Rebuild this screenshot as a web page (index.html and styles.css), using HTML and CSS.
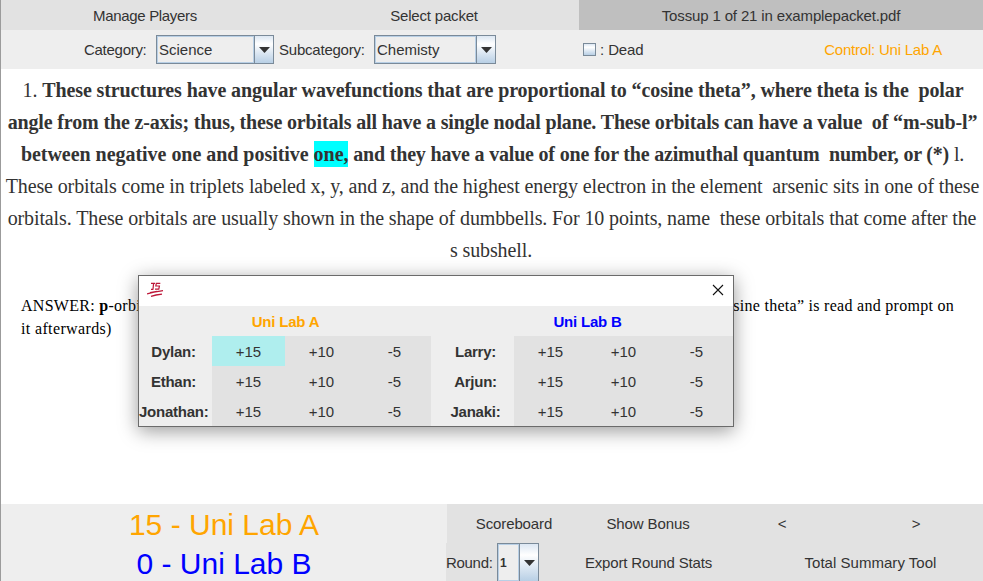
FILE: index.html
```html
<!DOCTYPE html>
<html lang="en">
<head>
<meta charset="utf-8">
<title>Tossup reader</title>
<link rel="stylesheet" href="styles.css">
</head>
<body>
<div class="app">
  <nav class="menu">
    <div class="menu-item manage"><span>Manage Players</span></div>
    <div class="menu-item select"><span>Select packet</span></div>
    <div class="menu-item current"><span>Tossup 1 of 21 in examplepacket.pdf</span></div>
  </nav>
  <div class="filters">
    <span class="label category">Category:</span>
    <div class="combo combo-category"><span class="value">Science</span><span class="arrow"><svg width="11" height="6" viewBox="0 0 11 6"><path d="M0 0h11L5.5 6z" fill="#333"/></svg></span></div>
    <span class="label subcategory">Subcategory:</span>
    <div class="combo combo-sub"><span class="value">Chemisty</span><span class="arrow"><svg width="11" height="6" viewBox="0 0 11 6"><path d="M0 0h11L5.5 6z" fill="#333"/></svg></span></div>
    <span class="check"></span>
    <span class="label dead">: Dead</span>
    <span class="control">Control: Uni Lab A</span>
  </div>
  <main class="content">
    <div class="question">
      <div class="line l1">1. <b>These structures have angular wavefunctions that are proportional to “cosine theta”, where theta is the&nbsp; polar</b></div>
      <div class="line l2"><b>angle from the z-axis; thus, these orbitals all have a single nodal plane. These orbitals can have a value&nbsp; of “m-sub-l”</b></div>
      <div class="line l3"><b><span class="lead">between negative one and positive <mark>one,</mark></span> and they have a value of one for the azimuthal quantum&nbsp; number, or (*)</b> l.</div>
      <div class="line l4">These orbitals come in triplets labeled x, y, and z, and the highest energy electron in the element&nbsp; arsenic sits in one of these</div>
      <div class="line l5">orbitals. These orbitals are usually shown in the shape of dumbbells. For 10 points, name&nbsp; these orbitals that come after the</div>
      <div class="line l6">s subshell.</div>
    </div>
    <div class="answer">
      <div class="answer-row"><span>ANSWER: <b>p</b>-orbitals</span><span>“cosine theta” is read and prompt on</span></div>
      <div class="answer-end">it afterwards)</div>
    </div>
  </main>
  <footer class="footer">
    <div class="scores">
      <div class="score team-a">15 - Uni Lab A</div>
      <div class="score team-b">0 - Uni Lab B</div>
    </div>
    <div class="actions">
      <div class="action-row top"><span>Scoreboard</span><span>Show Bonus</span><span>&lt;</span><span>&gt;</span></div>
      <div class="action-row bottom">
        <div class="round"><span class="label">Round:</span><div class="combo combo-round"><span class="value">1</span><span class="arrow"><svg width="11" height="6" viewBox="0 0 11 6"><path d="M0 0h11L5.5 6z" fill="#333"/></svg></span></div></div>
        <span class="export">Export Round Stats</span><span class="total">Total Summary Tool</span>
      </div>
    </div>
  </footer>
</div>
<div class="dialog">
  <div class="titlebar">
    <svg class="logo" width="17" height="16" viewBox="0 0 17 16" fill="none" stroke="#bd1738"><path stroke-width="1.2" d="M4 1.4h4M6.6 1.4L6 7.3M4 7.4h2.4M13.3 1.4H9.3L8.8 4h3.6L11.8 7.2H8"/><path stroke-width="1.3" d="M0 11.8L7 10.2 16 8.7M3 10.6L10 9.4M4 14.4L9 13 15 12.2"/></svg>
    <svg class="close" width="12" height="12" viewBox="0 0 12 12"><path d="M1 1l10 10M11 1L1 11" stroke="#111" stroke-width="1.1"/></svg>
  </div>
  <div class="teams">
    <div class="team team-left">
      <div class="team-name team-a">Uni Lab A</div>
      <div class="player"><b>Dylan:</b><span class="picked">+15</span><span>+10</span><span>-5</span></div>
      <div class="player"><b>Ethan:</b><span>+15</span><span>+10</span><span>-5</span></div>
      <div class="player"><b>Jonathan:</b><span>+15</span><span>+10</span><span>-5</span></div>
    </div>
    <div class="team team-right">
      <div class="team-name team-b">Uni Lab B</div>
      <div class="player"><b>Larry:</b><span>+15</span><span>+10</span><span>-5</span></div>
      <div class="player"><b>Arjun:</b><span>+15</span><span>+10</span><span>-5</span></div>
      <div class="player"><b>Janaki:</b><span>+15</span><span>+10</span><span>-5</span></div>
    </div>
  </div>
</div>
</body>
</html>
```
FILE: styles.css
```css
* { box-sizing: border-box; }
body {
  margin: 0;
  width: 983px;
  height: 581px;
  overflow: hidden;
  background: #fff;
  color: #333;
  font: 15px/18px "Liberation Sans", Arial, sans-serif;
}
.app { display: flex; flex-direction: column; height: 581px; border-left: 1px solid #9b9b9b; }
.menu { display: flex; height: 30px; background: #e2e2e2; }
.menu-item { display: flex; align-items: center; justify-content: center; padding-top: 2px; white-space: nowrap; }
.manage { width: 288px; letter-spacing: -.33px; }
.select { width: 290px; letter-spacing: -.18px; }
.current { flex: 1; background: #bfbfbf; letter-spacing: -.14px; }
.filters { display: flex; align-items: center; height: 39px; background: #eee; white-space: nowrap; }
.category { width: 72px; margin-left: 83px; letter-spacing: -.28px; }
.subcategory { width: 95px; margin-left: 5px; letter-spacing: -.22px; }
.combo { display: flex; border: 1px solid #7a8a99; background: #eee; }
.combo .value { flex: 1; border: 1px solid #b8cfe5; display: flex; align-items: center; padding-left: 1px; }
.combo .arrow {
  width: 19px;
  border-left: 1px solid #7a8a99;
  display: flex;
  align-items: center;
  justify-content: center;
  background: linear-gradient(#dce7f3, #fff 30%, #e9f0f7 50%, #b8cfe5);
}
.combo-category { width: 118px; height: 29px; }
.combo-sub { width: 122px; height: 29px; }
.check { width: 13px; height: 13px; margin-left: 87px; border: 1px solid #7a8a99; background: linear-gradient(#dce7f3, #fff 30%, #b8cfe5); }
.dead { margin-left: 4px; letter-spacing: -.1px; }
.control { margin-left: auto; margin-right: 41px; color: #ffa500; letter-spacing: -.22px; }
.content { flex: 1; }
.question { padding-top: 5px; font: 20px/32px "Liberation Serif", "Times New Roman", serif; text-align: center; }
.line { display: flex; justify-content: center; white-space: pre; height: 32px; }
.l1 { letter-spacing: -.108px; padding-left: 2px; }
.l2 { letter-spacing: -.15px; padding-left: 1px; }
.l3 { letter-spacing: -.19px; padding-left: 1px; }
.lead { letter-spacing: -.035px; }
.l4 { letter-spacing: -.125px; padding-left: 1px; }
.l5 { letter-spacing: -.112px; }
.l6 { letter-spacing: -.1px; padding-right: 2px; }
mark { background: #0ff; color: inherit; padding: 2px 0; }
.answer { padding: 28px 29px 0 20px; font: 16px/23px "Liberation Serif", "Times New Roman", serif; letter-spacing: .28px; color: #000; }
.answer-row { display: flex; justify-content: space-between; }
.answer-end { letter-spacing: .36px; }
.footer { display: flex; height: 77px; background: #eee; }
.scores { width: 445px; padding-left: 1px; text-align: center; }
.score { height: 39px; line-height: 42px; font-size: 30px; }
.team-a { color: #ffa500; }
.team-b { color: #00f; }
.actions { flex: 1; background: #e2e2e2; }
.action-row { display: flex; height: 39px; align-items: center; text-align: center; white-space: nowrap; }
.top { border-left: 1px solid #eee; }
.top span { flex: 1; letter-spacing: -.12px; }
.round { display: flex; align-items: center; width: 93px; height: 39px; }
.round .label { width: 51px; text-align: left; letter-spacing: -.3px; }
.combo-round { width: 42px; height: 39px; }
.combo-round .value { font-size: 12px; font-weight: bold; }
.export { width: 219px; letter-spacing: -.16px; }
.total { width: 225px; letter-spacing: .03px; }
.dialog {
  position: absolute;
  left: 138px;
  top: 275px;
  width: 596px;
  height: 152px;
  border: 1px solid #6b6b6b;
  background: #eee;
  box-shadow: 0 4px 18px rgba(0, 0, 0, .4);
}
.titlebar { display: flex; justify-content: space-between; height: 30px; padding: 6px 9px 0 8px; background: #fff; }
.close { margin-top: 2px; }
.teams { display: flex; }
.team-left { width: 292px; }
.team-right { width: 302px; }
.team-name { height: 30px; line-height: 32px; text-align: center; font-weight: bold; letter-spacing: -.2px; }
.team-left .team-name { padding-left: 1px; }
.team-right .team-name { padding-left: 11px; }
.player { display: flex; height: 30px; line-height: 32px; text-align: center; white-space: nowrap; }
.player b { width: 73px; padding-right: 4px; letter-spacing: -.25px; }
.team-right b { width: 83px; padding: 0 0 0 6px; }
.player span { width: 73px; background: #e2e2e2; }
.player .picked { background: #afeeee; }
```
